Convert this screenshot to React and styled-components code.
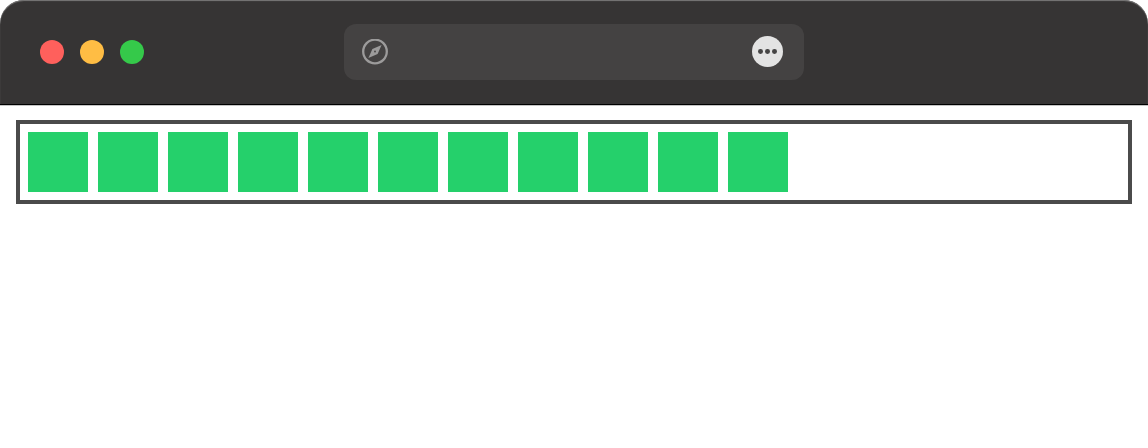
import React from "react";
import styled, { createGlobalStyle } from "styled-components";

const Global = createGlobalStyle`
  html, body { margin: 0; padding: 0; background: #fff; }
  body { width: 1148px; height: 448px; overflow: hidden; }
`;

const Page = styled.div`
  display: flex;
  flex-direction: column;
  width: 1148px;
  height: 448px;
  background: #fff;
`;

const TitleBar = styled.header`
  box-sizing: border-box;
  display: grid;
  grid-template-columns: 344px 460px 1fr;
  align-items: center;
  height: 105px;
  padding-bottom: 1px;
  background: #363434;
  border-radius: 24px 24px 0 0;
  border-bottom: 1px solid #000;
  box-shadow: inset 0 1px 1px #7a7979, 0 1px 0 #c4c4c4;
`;

const Lights = styled.div`
  display: flex;
  gap: 16px;
  padding-left: 40px;
`;

const Light = styled.span`
  width: 24px;
  height: 24px;
  border-radius: 50%;
  background: ${(p) => p.$color};
`;

const AddressBar = styled.div`
  box-sizing: border-box;
  display: flex;
  align-items: center;
  justify-content: space-between;
  height: 56px;
  padding: 0 21px 0 18px;
  background: #444242;
  border-radius: 12px;
`;

const MoreButton = styled.span`
  display: flex;
  align-items: center;
  justify-content: center;
  gap: 2.6px;
  width: 31px;
  height: 31px;
  border-radius: 50%;
  background: #e3e3e3;
`;

const Dot = styled.i`
  width: 4.8px;
  height: 4.8px;
  border-radius: 50%;
  background: #454444;
`;

const Track = styled.section`
  box-sizing: border-box;
  display: flex;
  gap: 10px;
  height: 84px;
  margin: 15px 16px 0;
  padding: 8px;
  border: 4px solid #4b4b4b;
`;

const Block = styled.div`
  width: 60px;
  height: 60px;
  background: #25d06b;
`;

const Compass = () => (
  <svg width="26" height="26" viewBox="0 0.5 26 26" aria-hidden="true">
    <circle cx="13" cy="13" r="11.8" fill="none" stroke="#9c9b9b" strokeWidth="2.3" />
    <path d="M19.6 6.4 L15.6 15.6 L6.4 19.6 L10.4 10.4 Z" fill="#9c9b9b" />
    <circle cx="13" cy="13" r="0.9" fill="#444242" />
  </svg>
);

export default function App() {
  return (
    <Page>
      <Global />
      <TitleBar>
        <Lights>
          <Light $color="#ff605c" />
          <Light $color="#ffbd44" />
          <Light $color="#35c94a" />
        </Lights>
        <AddressBar>
          <Compass />
          <MoreButton>
            <Dot />
            <Dot />
            <Dot />
          </MoreButton>
        </AddressBar>
      </TitleBar>
      <Track>
        {Array.from({ length: 11 }, (_, i) => (
          <Block key={i} />
        ))}
      </Track>
    </Page>
  );
}
